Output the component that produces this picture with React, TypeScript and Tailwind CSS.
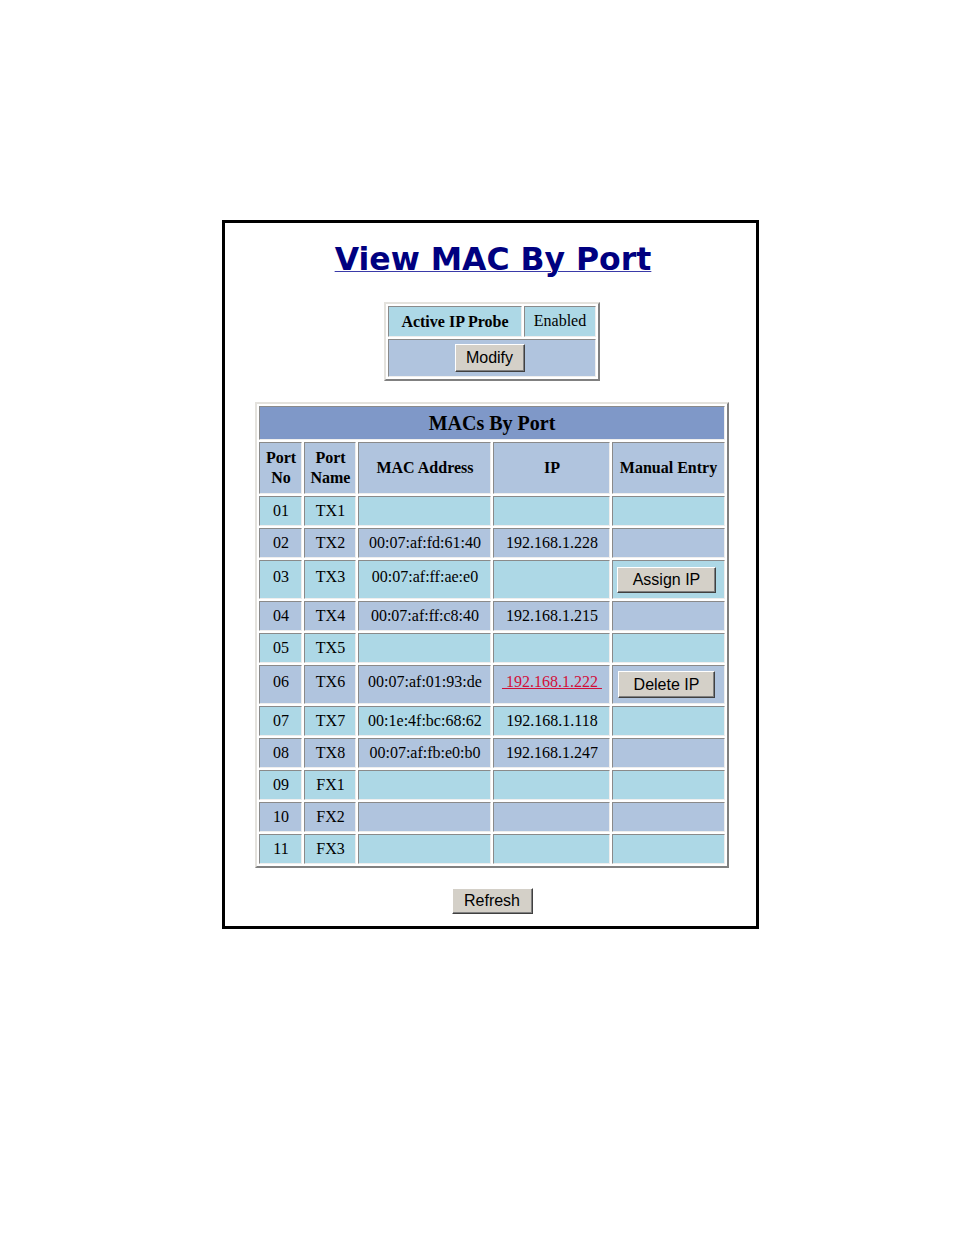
import React from "react"

type Row = {
  no: string
  name: string
  mac?: string
  ip?: string
  action?: "assign" | "delete"
}

const ROWS: Row[] = [
  { no: "01", name: "TX1" },
  { no: "02", name: "TX2", mac: "00:07:af:fd:61:40", ip: "192.168.1.228" },
  { no: "03", name: "TX3", mac: "00:07:af:ff:ae:e0", action: "assign" },
  { no: "04", name: "TX4", mac: "00:07:af:ff:c8:40", ip: "192.168.1.215" },
  { no: "05", name: "TX5" },
  { no: "06", name: "TX6", mac: "00:07:af:01:93:de", ip: "192.168.1.222", action: "delete" },
  { no: "07", name: "TX7", mac: "00:1e:4f:bc:68:62", ip: "192.168.1.118" },
  { no: "08", name: "TX8", mac: "00:07:af:fb:e0:b0", ip: "192.168.1.247" },
  { no: "09", name: "FX1" },
  { no: "10", name: "FX2" },
  { no: "11", name: "FX3" },
]

// classic win98-ish push button
function Btn({ label, w, h }: { label: string; w: string; h: string }) {
  return (
    <button
      className={`${w} ${h} inline-flex items-center justify-center bg-[#d4d0c8] text-black text-[16px] leading-none font-['Liberation_Sans',Arial,sans-serif] border border-t-white border-l-white border-r-[#404040] border-b-[#404040] shadow-[inset_-1px_-1px_0_#808080]`}
    >
      {label}
    </button>
  )
}

const cell =
  "border border-t-[#8a8a8a] border-l-[#8a8a8a] border-r-[#eeeeee] border-b-[#eeeeee] text-center align-middle p-0"

export default function App() {
  return (
    <div className="min-h-[1235px] bg-white pt-[220px] pl-[222px]">
      <div className="w-[537px] h-[709px] border-[3px] border-black flex flex-col items-center pt-[18px] pl-[3px] font-['Liberation_Serif','Times_New_Roman',serif] text-black">

        {/* Title */}
        <h1 className="text-[31.5px] leading-[36px] font-bold font-['DejaVu_Sans',Verdana,sans-serif] text-[#000080] underline overline decoration-[#3a3aa8] decoration-1 pl-[2px]">
          View MAC By Port
        </h1>

        {/* Active IP probe */}
        <table className="mt-[25px] w-[216px] border-separate border-spacing-[2px] border-2 border-t-[#e4e2dd] border-l-[#e4e2dd] border-r-[#808080] border-b-[#808080] text-[16px]">
          <tbody>
            <tr className="h-[31px] bg-[#add8e6]">
              <td className={`${cell} w-[134px] font-bold`}>Active IP Probe</td>
              <td className={`${cell} w-[72px] pb-[2px]`}>Enabled</td>
            </tr>
            <tr className="h-[38px] bg-[#b0c4de]">
              <td colSpan={2} className={`${cell} pr-[5px]`}>
                <Btn label="Modify" w="w-[70px]" h="h-[28px]" />
              </td>
            </tr>
          </tbody>
        </table>

        {/* MACs by port */}
        <table className="mt-[21px] w-[473px] table-fixed border-separate border-spacing-[2px] border-2 border-t-[#e4e2dd] border-l-[#e4e2dd] border-r-[#808080] border-b-[#808080] text-[16px]">
          <colgroup>
            <col className="w-[43px]" />
            <col className="w-[52px]" />
            <col className="w-[133px]" />
            <col className="w-[117px]" />
            <col className="w-[112px]" />
          </colgroup>
          <tbody>
            <tr className="h-[34px] bg-[#7f98c8]">
              <td colSpan={5} className={`${cell} text-[20px] font-bold pb-[1px]`}>MACs By Port</td>
            </tr>
            <tr className="h-[52px] bg-[#b0c4de] font-bold leading-[20px]">
              <td className={cell}>Port<br />No</td>
              <td className={cell}>Port<br />Name</td>
              <td className={cell}>MAC Address</td>
              <td className={cell}>IP</td>
              <td className={cell}>Manual Entry</td>
            </tr>
            {ROWS.map((r, i) => {
              const tall = !!r.action
              const bg = i % 2 === 0 ? "bg-[#add8e6]" : "bg-[#b0c4de]"
              const txt = `${cell} ${tall ? "pb-[6px]" : ""}`
              return (
                <tr key={r.no} className={`${tall ? "h-[39px]" : "h-[30px]"} ${bg}`}>
                  <td className={txt}>{r.no}</td>
                  <td className={txt}>{r.name}</td>
                  <td className={txt}>{r.mac ?? ""}</td>
                  <td className={txt}>
                    {r.action === "delete" ? (
                      <span className="text-[#d0103a] underline decoration-[#d0103a]">
                        {"\u00a0"}{r.ip}{"\u00a0"}
                      </span>
                    ) : (
                      r.ip ?? ""
                    )}
                  </td>
                  <td className={`${cell} pr-[4px]`}>
                    {r.action === "assign" && <Btn label="Assign IP" w="w-[99px]" h="h-[26px]" />}
                    {r.action === "delete" && <Btn label="Delete IP" w="w-[97px]" h="h-[27px]" />}
                  </td>
                </tr>
              )
            })}
          </tbody>
        </table>

        <div className="mt-[20px]">
          <Btn label="Refresh" w="w-[81px]" h="h-[26px]" />
        </div>
      </div>
    </div>
  )
}
